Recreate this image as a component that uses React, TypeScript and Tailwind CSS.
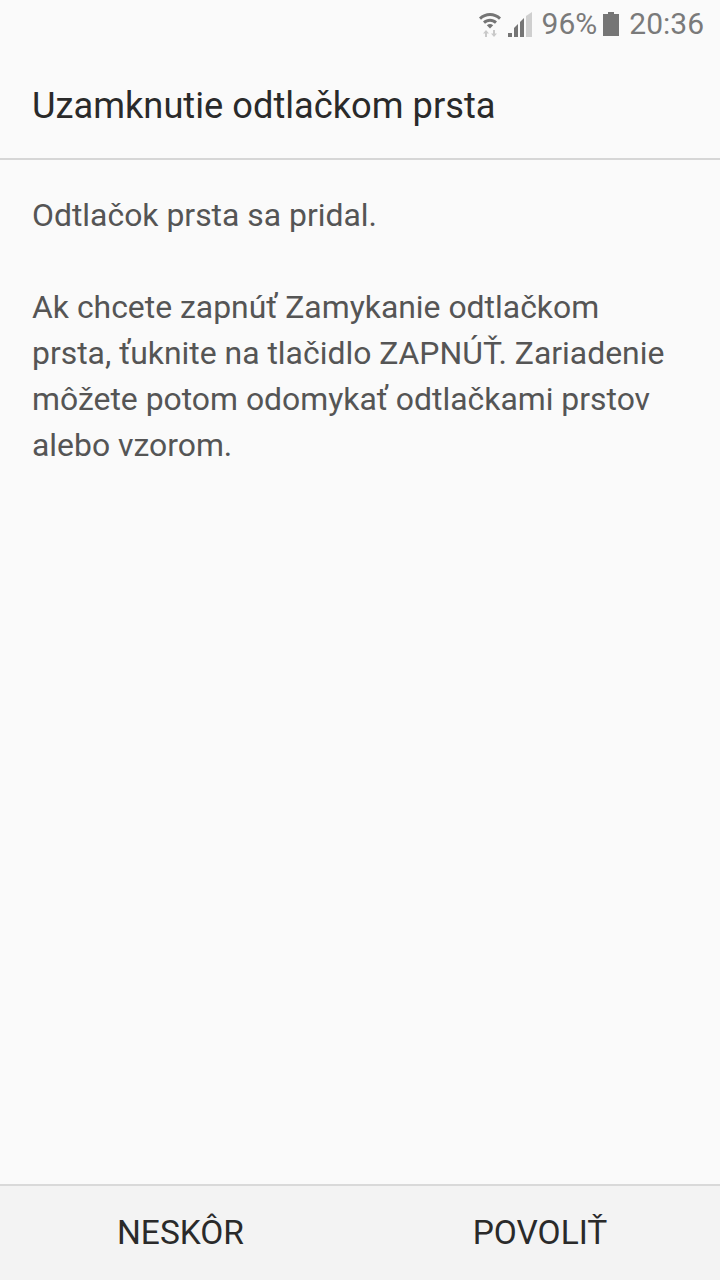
function WifiIcon() {
    return (
        <svg width="24" height="26" viewBox="0 0 24 26" className="mr-[6px]">
            <path d="M1 6.5C7 .5 17 .5 23 6.5L21 8.8C16 3.8 8 3.8 3 8.8Z" fill="#757575"/>
            <path d="M5 10.5C9 6.8 15 6.8 19 10.5L17 12.7C14 10 10 10 7 12.7Z" fill="#757575"/>
            <path d="M8.8 14.2C11 12.6 13 12.6 15.2 14.2L12 17.5Z" fill="#757575"/>
            <path d="M8 19L11 22.5H9V26H7V22.5H5Z" fill="#c9c9c9"/>
            <path d="M16 26L13 22.5H15V19H17V22.5H19Z" fill="#c9c9c9"/>
        </svg>
    );
}

function SignalIcon() {
    return (
        <svg width="25" height="25" viewBox="0 0 25 25" className="mr-[9px]">
            <path d="M0 25V21H4V25Z" fill="#757575"/>
            <path d="M6 25V16L10 12V25Z" fill="#757575"/>
            <path d="M12 25V10L16 6V25Z" fill="#757575"/>
            <path d="M18 25V4L24 0V25Z" fill="#cfcfcf"/>
        </svg>
    );
}

function BatteryIcon() {
    return (
        <svg width="16" height="24" viewBox="0 0 16 24" className="ml-[6px] mr-[10px]">
            <path d="M5 0H11V2H16V24H0V2H5Z" fill="#757575"/>
        </svg>
    );
}

export default function App() {
    return (
        <div className="w-[720px] h-[1280px] flex flex-col bg-[#fafafa] font-['Roboto',sans-serif]">
            <div className="h-[48px] flex items-center justify-end pr-[16px] text-[#7a7a7a] text-[30px] leading-[48px]">
                <WifiIcon/>
                <SignalIcon/>
                <span>96%</span>
                <BatteryIcon/>
                <span>20:36</span>
            </div>

            <div className="h-[112px] flex items-center px-[32px] pt-[6px] border-b-2 border-[#d6d6d6]">
                <h1 className="text-[36.25px] text-[#2a2a2a] leading-[46px]">Uzamknutie odtlačkom prsta</h1>
            </div>

            <div className="flex-1 pl-[32px] pr-[40px] pt-[32px] text-[#555555] text-[31.9px] leading-[46px]">
                <p className="mb-[46px]">Odtlačok prsta sa pridal.</p>
                <p>
                    Ak chcete zapnúť Zamykanie odtlačkom prsta, ťuknite na tlačidlo ZAPNÚŤ. Zariadenie môžete potom odomykať odtlačkami prstov alebo vzorom.
                </p>
            </div>

            <div className="h-[96px] flex border-t-2 border-[#d9d9d9] bg-[#f3f3f3] text-[#2a2a2a] text-[33.5px]">
                <button className="w-1/2 pl-[1px] flex items-center justify-center">NESKÔR</button>
                <button className="w-1/2 flex items-center justify-center">POVOLIŤ</button>
            </div>
        </div>
    );
}
